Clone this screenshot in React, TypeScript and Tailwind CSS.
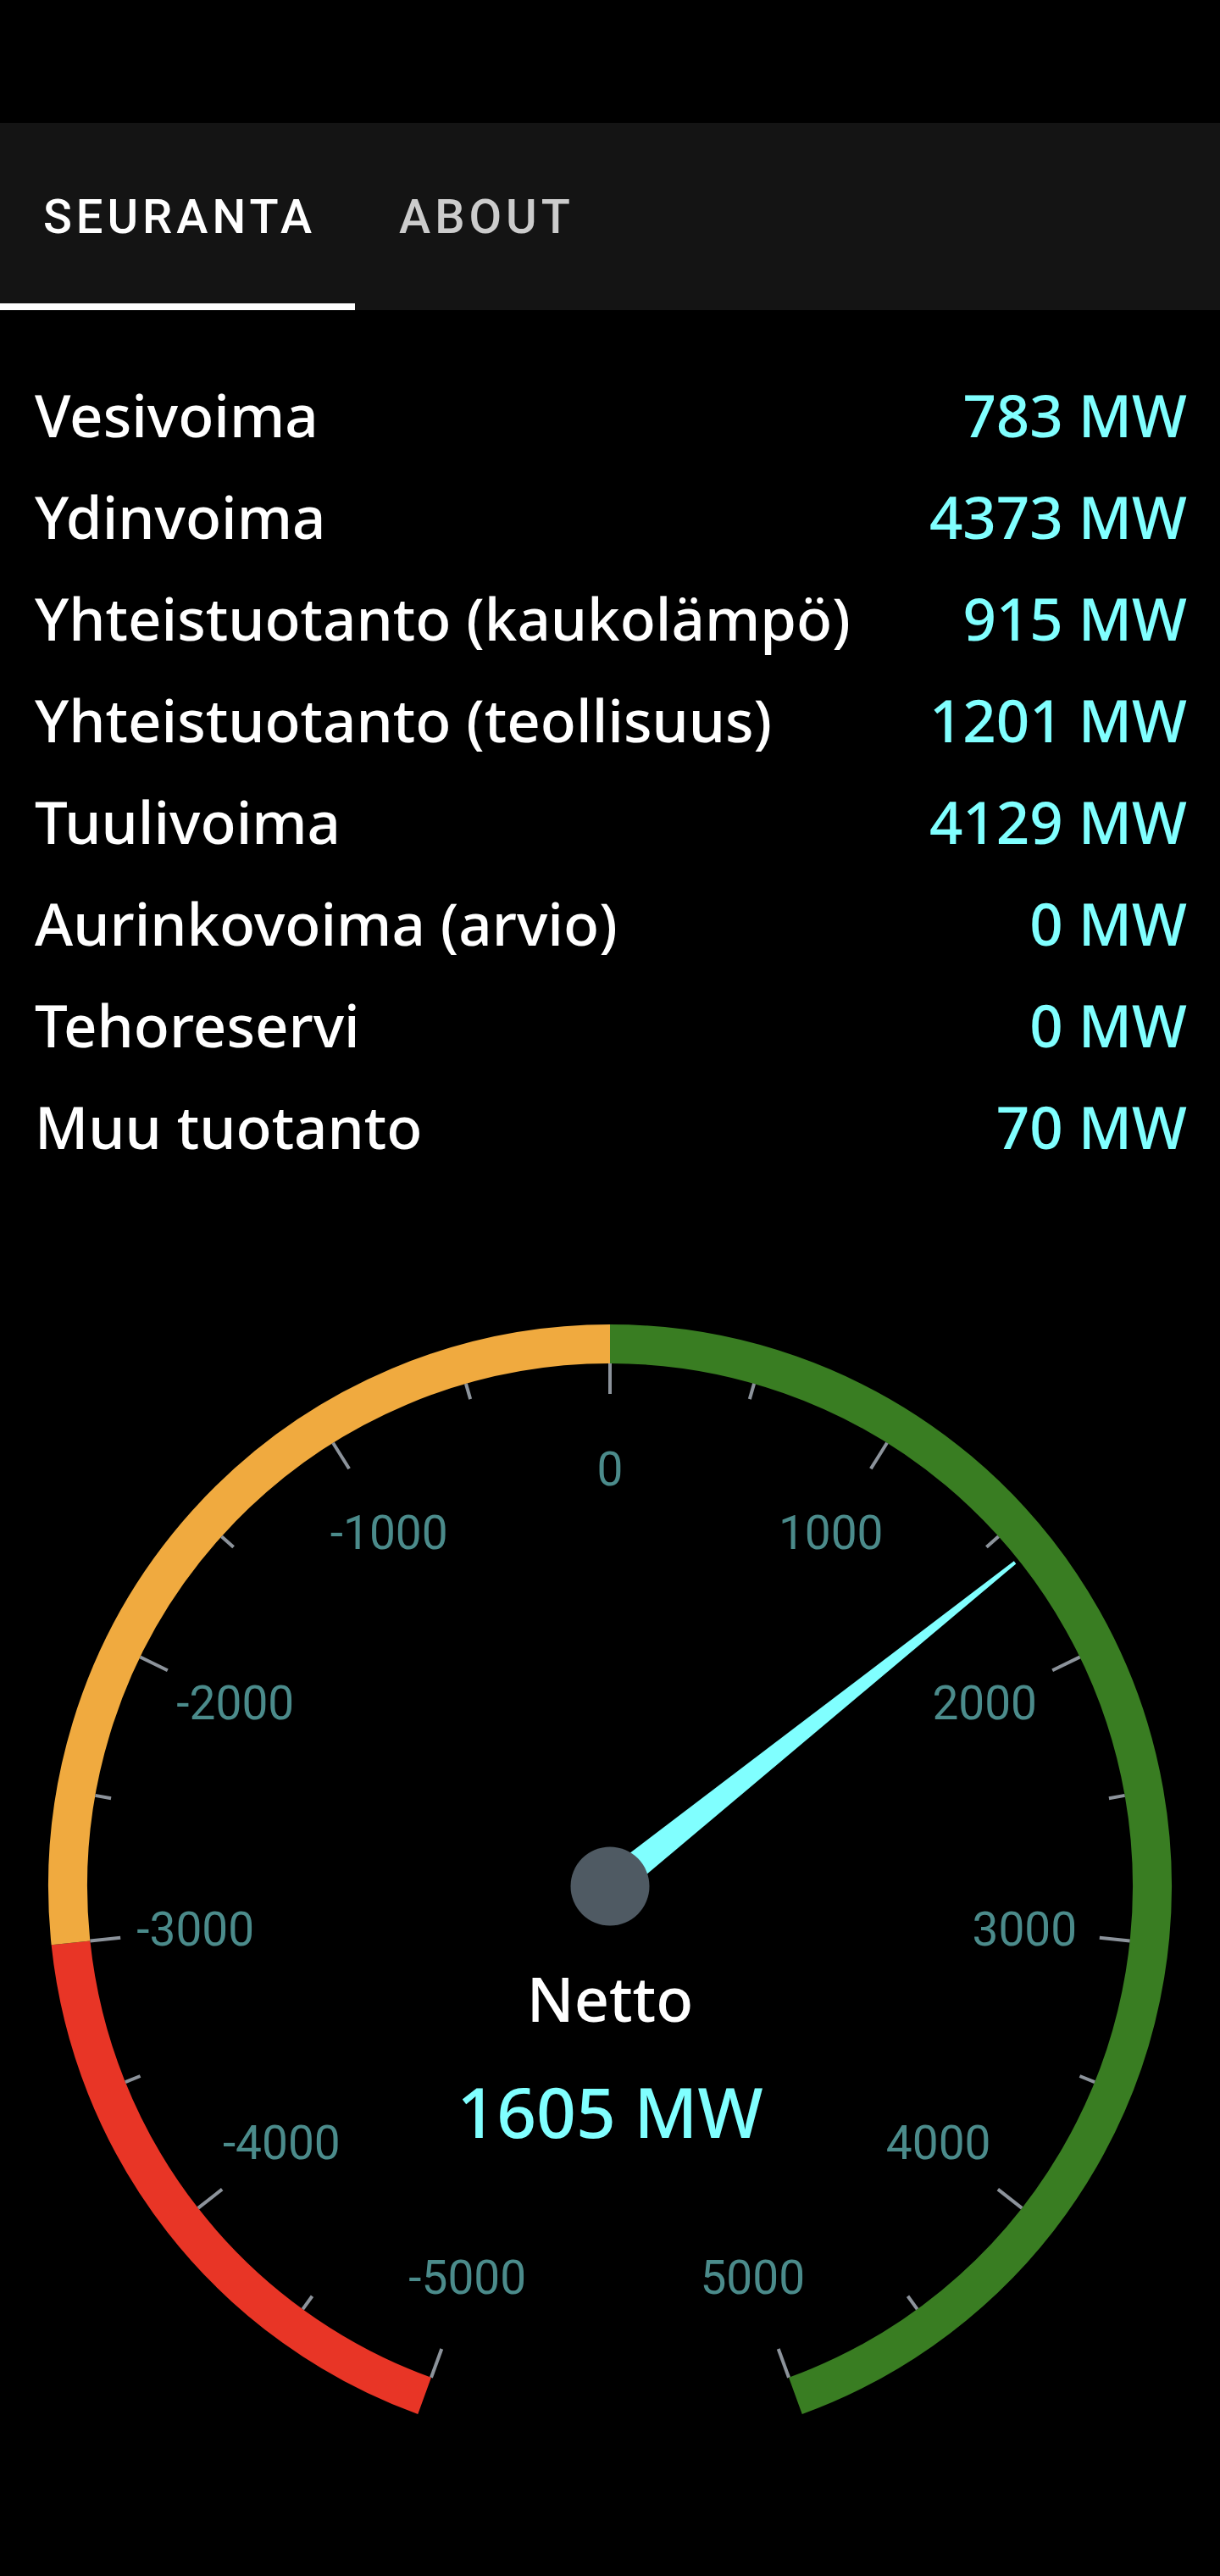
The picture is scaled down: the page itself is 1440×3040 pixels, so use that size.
import React from "react";

const rows: [string, string][] = [
  ["Vesivoima", "783 MW"],
  ["Ydinvoima", "4373 MW"],
  ["Yhteistuotanto (kaukolämpö)", "915 MW"],
  ["Yhteistuotanto (teollisuus)", "1201 MW"],
  ["Tuulivoima", "4129 MW"],
  ["Aurinkovoima (arvio)", "0 MW"],
  ["Tehoreservi", "0 MW"],
  ["Muu tuotanto", "70 MW"],
];

const CX = 720;
const CY = 837;
const DEG_PER_UNIT = 32 / 1000;

function pt(angleDeg: number, r: number): [number, number] {
  const a = (angleDeg * Math.PI) / 180;
  return [CX + r * Math.sin(a), CY - r * Math.cos(a)];
}

function arcPath(a0: number, a1: number, r: number) {
  const [x0, y0] = pt(a0, r);
  const [x1, y1] = pt(a1, r);
  const large = Math.abs(a1 - a0) > 180 ? 1 : 0;
  return `M ${x0} ${y0} A ${r} ${r} 0 ${large} 1 ${x1} ${y1}`;
}

function Gauge({ value }: { value: number }) {
  const R = 640;
  const SW = 46;
  const inner = R - SW / 2;
  const ticks: React.ReactNode[] = [];
  for (let v = -5000; v <= 5000; v += 500) {
    const major = v % 1000 === 0;
    const a = v * DEG_PER_UNIT;
    const [x0, y0] = pt(a, inner);
    const [x1, y1] = pt(a, inner - (major ? 36 : 19));
    ticks.push(
      <line key={`t${v}`} x1={x0} y1={y0} x2={x1} y2={y1} stroke="#8c939b" strokeWidth={4} />
    );
  }
  const labels: React.ReactNode[] = [];
  for (let v = -5000; v <= 5000; v += 1000) {
    const [x, y] = pt(v * DEG_PER_UNIT, 492);
    labels.push(
      <text
        key={`l${v}`}
        x={x}
        y={y}
        textAnchor="middle"
        dominantBaseline="central"
        fontFamily="Roboto, 'Liberation Sans', sans-serif"
        fontSize={55}
        fill="#4b8b8b"
      >
        {v}
      </text>
    );
  }
  const na = value * DEG_PER_UNIT;
  const rad = (na * Math.PI) / 180;
  const dx = Math.sin(rad);
  const dy = -Math.cos(rad);
  const px = -dy;
  const py = dx;
  const L = 612;
  const bw = 17;
  const tw = 2;
  const needle = [
    [CX + px * bw, CY + py * bw],
    [CX + dx * L + px * tw, CY + dy * L + py * tw],
    [CX + dx * L - px * tw, CY + dy * L - py * tw],
    [CX - px * bw, CY - py * bw],
  ]
    .map((p) => p.join(","))
    .join(" ");

  return (
    <svg width={1440} height={1650} viewBox="0 0 1440 1650" className="block">
      <path d={arcPath(-160, -96, R)} stroke="#e83526" strokeWidth={SW} fill="none" />
      <path d={arcPath(-96, 0, R)} stroke="#f0aa3f" strokeWidth={SW} fill="none" />
      <path d={arcPath(0, 160, R)} stroke="#397d22" strokeWidth={SW} fill="none" />
      {ticks}
      {labels}
      <polygon points={needle} fill="#80ffff" />
      <circle cx={CX} cy={CY} r={46.5} fill="#4f5a63" />
      <text
        x={CX}
        y={997}
        textAnchor="middle"
        fontFamily="'Noto Sans', 'Open Sans', sans-serif"
        fontWeight={500}
        fontSize={72}
        fill="#ffffff"
      >
        Netto
      </text>
      <text
        x={CX}
        y={1134}
        textAnchor="middle"
        fontFamily="'Noto Sans', 'Open Sans', sans-serif"
        fontWeight={500}
        fontSize={82}
        fill="#80ffff"
      >
        1605 MW
      </text>
    </svg>
  );
}

export default function App() {
  return (
    <div className="w-[1440px] min-h-[3040px] bg-black">
      <div className="h-[145px]" />
      <div className="flex h-[221px] bg-[#141414] font-['Roboto',sans-serif] font-medium text-[56px] tracking-[5px]">
        <div className="relative flex w-[419px] items-center justify-center text-white">
          <span className="pl-[5px]">SEURANTA</span>
          <div className="absolute bottom-0 left-0 h-[8px] w-full bg-white" />
        </div>
        <div className="flex items-center pl-[52px] text-[#cccccc]">ABOUT</div>
      </div>
      <div className="pt-[63px] pl-[41px] pr-[39px] font-['Noto_Sans','Open_Sans',sans-serif] font-medium text-[69px] leading-[120px]">
        {rows.map(([label, value]) => (
          <div key={label} className="flex justify-between">
            <span className="text-white">{label}</span>
            <span className="text-[#80ffff]">{value}</span>
          </div>
        ))}
      </div>
      <Gauge value={1605} />
    </div>
  );
}
